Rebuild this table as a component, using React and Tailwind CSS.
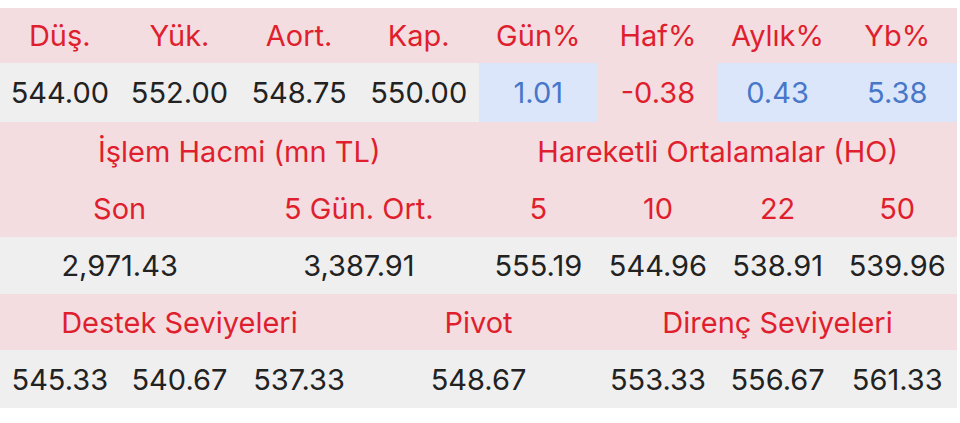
const pink = 'bg-[#f3dde0]';
const gray = 'bg-[#efefef]';
const blue = 'bg-[#dbe6fb]';

function Cell({ children, className = '' }) {
  return <div className={`flex items-center justify-center whitespace-nowrap ${className}`}>{children}</div>;
}

export default function App() {
  const top = ['Düş.', 'Yük.', 'Aort.', 'Kap.', 'Gün%', 'Haf%', 'Aylık%', 'Yb%'];
  return (
    <div
      className="w-[960px] h-[423px] bg-white pt-[8px] text-[29px] leading-none"
      style={{ fontFamily: 'Inter, "Noto Sans", sans-serif' }}
    >
      <div className="w-[957px] grid grid-cols-8">
        {top.map((t) => (
          <Cell key={t} className={`${pink} h-[55px] text-[#e01f2e]`}>{t}</Cell>
        ))}

        <Cell className={`${gray} h-[59px] text-[#222]`}>544.00</Cell>
        <Cell className={`${gray} h-[59px] text-[#222]`}>552.00</Cell>
        <Cell className={`${gray} h-[59px] text-[#222]`}>548.75</Cell>
        <Cell className={`${gray} h-[59px] text-[#222]`}>550.00</Cell>
        <Cell className={`${blue} h-[59px] text-[#4777c9]`}>1.01</Cell>
        <Cell className={`${pink} h-[59px] text-[#e01f2e]`}>-0.38</Cell>
        <Cell className={`${blue} h-[59px] text-[#4777c9]`}>0.43</Cell>
        <Cell className={`${blue} h-[59px] text-[#4777c9]`}>5.38</Cell>

        <Cell className={`${pink} col-span-4 h-[58px] text-[#e01f2e]`}>İşlem Hacmi (mn TL)</Cell>
        <Cell className={`${pink} col-span-4 h-[58px] text-[#e01f2e]`}>Hareketli Ortalamalar (HO)</Cell>

        <Cell className={`${pink} col-span-2 h-[57px] text-[#e01f2e]`}>Son</Cell>
        <Cell className={`${pink} col-span-2 h-[57px] text-[#e01f2e]`}>5 Gün. Ort.</Cell>
        {['5', '10', '22', '50'].map((t) => (
          <Cell key={t} className={`${pink} h-[57px] text-[#e01f2e]`}>{t}</Cell>
        ))}

        <Cell className={`${gray} col-span-2 h-[57px] text-[#222]`}>2,971.43</Cell>
        <Cell className={`${gray} col-span-2 h-[57px] text-[#222]`}>3,387.91</Cell>
        {['555.19', '544.96', '538.91', '539.96'].map((t) => (
          <Cell key={t} className={`${gray} h-[57px] text-[#222]`}>{t}</Cell>
        ))}

        <Cell className={`${pink} col-span-3 h-[56px] text-[#e01f2e]`}>Destek Seviyeleri</Cell>
        <Cell className={`${pink} col-span-2 h-[56px] text-[#e01f2e]`}>Pivot</Cell>
        <Cell className={`${pink} col-span-3 h-[56px] text-[#e01f2e]`}>Direnç Seviyeleri</Cell>

        {['545.33', '540.67', '537.33'].map((t) => (
          <Cell key={t} className={`${gray} h-[58px] text-[#222]`}>{t}</Cell>
        ))}
        <Cell className={`${gray} col-span-2 h-[58px] text-[#222]`}>548.67</Cell>
        {['553.33', '556.67', '561.33'].map((t) => (
          <Cell key={t} className={`${gray} h-[58px] text-[#222]`}>{t}</Cell>
        ))}
      </div>
    </div>
  );
}
